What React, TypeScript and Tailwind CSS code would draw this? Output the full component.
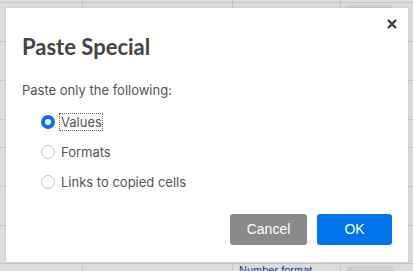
import { useState } from "react";

const options = ["Values", "Formats", "Links to copied cells"];

// spreadsheet behind the modal
function SheetBackdrop() {
  const rows = [2, 41, 80, 119, 147, 186, 225, 263];
  const cols = [82, 232, 340];
  return (
    <div className="absolute inset-0 bg-[#dcdcdc] overflow-hidden">
      {rows.map((y) => (
        <div key={y} className="absolute left-0 right-0 h-px bg-[#c8c8c8]" style={{ top: y }} />
      ))}
      {cols.map((x) => (
        <div key={x} className="absolute top-0 bottom-0 w-px bg-[#c8c8c8]" style={{ left: x }} />
      ))}
      <div className="absolute left-[347px] top-[5px] w-[46px] h-[20px] rounded bg-[#cecece]" />
      <div className="absolute left-[347px] top-[266px] w-[46px] h-[20px] rounded bg-[#cecece]" />
      <div className="absolute left-[239px] top-[264px] text-[11px] leading-[13px] text-[#1d3d8f] font-['Liberation_Sans',sans-serif]">
        Number format
      </div>
    </div>
  );
}

export default function App() {
  const [selected, setSelected] = useState("Values");

  return (
    <div className="relative w-[413px] h-[271px] overflow-hidden">
      <SheetBackdrop />
      <div className="absolute left-[6px] top-[8px] w-[402px] h-[254px] bg-white shadow-[0_0_3px_rgba(0,0,0,0.12)] flex flex-col">
        <button
          type="button"
          className="absolute right-[10px] top-[10px] w-[12px] h-[12px] flex items-center justify-center"
        >
          <svg width="10" height="10" viewBox="0 0 10 10">
            <path d="M1 1L9 9M9 1L1 9" stroke="#333" strokeWidth="2" />
          </svg>
        </button>

        <h1 className="ml-[16px] mt-[26px] text-[22px] leading-[26px] font-bold text-[#444] font-['Lato',sans-serif]">
          Paste Special
        </h1>

        <p className="ml-[16px] mt-[22px] text-[13px] leading-[16px] text-[#555] font-['Inter',sans-serif]">
          Paste only the following:
        </p>

        <div className="ml-[35px] mt-[16px] flex flex-col gap-[14px]">
          {options.map((opt) => {
            const on = selected === opt;
            return (
              <label
                key={opt}
                className="flex items-center gap-[6px] cursor-pointer"
                onClick={() => setSelected(opt)}
              >
                {on ? (
                  <span className="w-[14px] h-[14px] rounded-full border-[4px] border-[#0a72e6] bg-white" />
                ) : (
                  <span className="w-[14px] h-[14px] rounded-full border border-[#c4c4c4] bg-white" />
                )}
                <span
                  className={
                    "text-[13px] leading-[16px] text-[#555] font-['Inter',sans-serif] " +
                    (on ? "outline outline-1 outline-dotted outline-[#666] -ml-[1px] pl-[1px]" : "")
                  }
                >
                  {opt}
                </span>
              </label>
            );
          })}
        </div>

        <div className="mt-auto mb-[17px] mr-[16px] flex justify-end gap-[10px]">
          <button
            type="button"
            className="w-[77px] h-[31px] rounded-[3px] bg-[#8a8a8a] text-white text-[14px] font-['Liberation_Sans',sans-serif]"
          >
            Cancel
          </button>
          <button
            type="button"
            className="w-[75px] h-[31px] rounded-[3px] bg-[#0074e8] text-white text-[14px] font-['Liberation_Sans',sans-serif]"
          >
            OK
          </button>
        </div>
      </div>
    </div>
  );
}
